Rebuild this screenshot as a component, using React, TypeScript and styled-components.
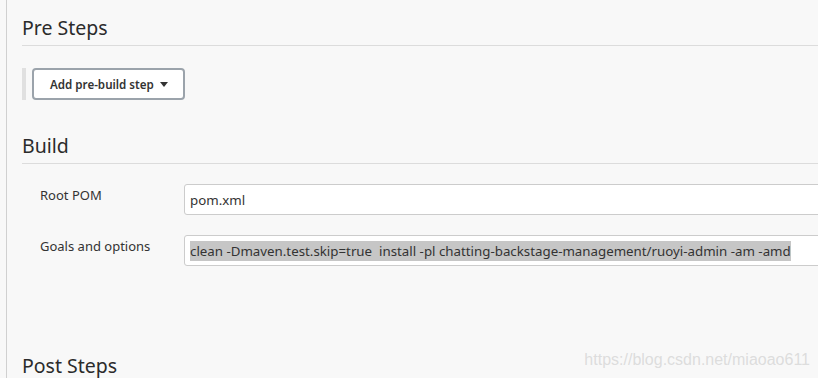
import styled, { createGlobalStyle } from 'styled-components';

const GlobalStyle = createGlobalStyle`
    html, body {
        margin: 0;
        padding: 0;
        background: #f8f8f8;
        overflow: hidden;
    }
    body {
        font-family: 'Noto Sans', 'Open Sans', sans-serif;
        color: #333;
    }
`;

const Page = styled.div`
    width: 818px;
    height: 378px;
    box-sizing: border-box;
    overflow: hidden;
    position: relative;
    padding-left: 6px;
    background: #f8f8f8;
`;

const Panel = styled.div`
    height: 100%;
    border-left: 1px solid #d0d0d0;
    padding: 15px 0 0 15px;
    box-sizing: border-box;
`;

const SectionTitle = styled.h2<{ $gap?: number }>`
    margin: ${(p) => p.$gap ?? 0}px 0 0 0;
    padding: 0 0 4px 0;
    font-size: 19.5px;
    line-height: 26px;
    font-weight: 400;
    color: #2b2b2b;
    border-bottom: 1px solid #dcdcdc;
`;

const StepBar = styled.div`
    display: flex;
    margin-top: 22px;
    border-left: 4px solid #e0e0e0;
    padding-left: 6px;
`;

const DropButton = styled.button`
    display: flex;
    align-items: center;
    gap: 6px;
    height: 32px;
    padding: 0 15px 0 16px;
    box-sizing: border-box;
    background: #fff;
    border: 2px solid #9ba3ab;
    border-radius: 4px;
    font-family: 'Noto Sans', 'Open Sans', sans-serif;
    font-size: 11.6px;
    font-weight: 600;
    color: #333;
`;

const Caret = styled.span`
    width: 0;
    height: 0;
    border-left: 4px solid transparent;
    border-right: 4px solid transparent;
    border-top: 5px solid #333;
`;

const Form = styled.div`
    display: grid;
    grid-template-columns: 144px 1fr;
    row-gap: 20px;
    margin-top: 20px;
    padding-left: 18px;
`;

const Label = styled.div`
    font-size: 13px;
    line-height: 20px;
    padding-top: 1px;
    color: #333;
`;

const Field = styled.div`
    width: 700px;
    height: 31px;
    box-sizing: border-box;
    background: #fff;
    border: 1px solid #cccccc;
    border-radius: 3px;
    padding: 0 5px;
    display: flex;
    align-items: center;
    font-size: 13.3px;
    color: #333;
    white-space: pre;
`;

const Selected = styled.span`
    background: #c6c6c6;
    line-height: 20px;
`;

const Watermark = styled.div`
    position: absolute;
    right: 8px;
    bottom: 9px;
    font-family: 'Liberation Sans', Arial, sans-serif;
    font-size: 16px;
    color: rgba(205, 205, 205, 0.65);
`;

export default function App() {
    return (
        <Page>
            <GlobalStyle />
            <Panel>
                <SectionTitle>Pre Steps</SectionTitle>
                <StepBar>
                    <DropButton>
                        Add pre-build step
                        <Caret />
                    </DropButton>
                </StepBar>
                <SectionTitle $gap={33}>Build</SectionTitle>
                <Form>
                    <Label>Root POM</Label>
                    <Field>pom.xml</Field>
                    <Label>Goals and options</Label>
                    <Field>
                        <Selected>clean -Dmaven.test.skip=true  install -pl chatting-backstage-management/ruoyi-admin -am -amd</Selected>
                    </Field>
                </Form>
                <SectionTitle $gap={87}>Post Steps</SectionTitle>
            </Panel>
            <Watermark>https://blog.csdn.net/miaoao611</Watermark>
        </Page>
    );
}
